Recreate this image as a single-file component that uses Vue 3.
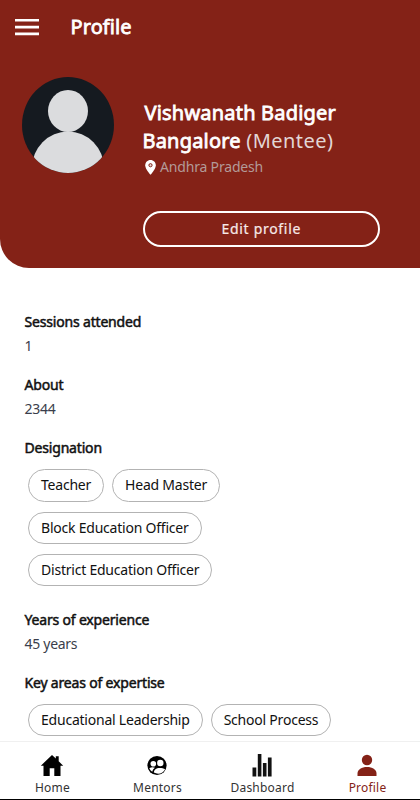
<script setup>
const designations = ['Teacher', 'Head Master', 'Block Education Officer', 'District Education Officer']
const expertise = ['Educational Leadership', 'School Process']
</script>

<template>
  <div class="screen">
    <header class="hero">
      <div class="toolbar">
        <svg class="menu" viewBox="0 0 24 17" width="24" height="17">
          <path d="M0 0h24v2.600H0zM0 6.800h24v2.600H0zM0 13.600h24v2.600H0z" fill="#fff" />
        </svg>
        <h1 class="title">Profile</h1>
      </div>
      <div class="identity">
        <svg class="avatar" viewBox="0 0 92 96" width="92" height="96">
          <defs>
            <clipPath id="avatar-clip"><ellipse cx="46" cy="48" rx="46" ry="48" /></clipPath>
          </defs>
          <g clip-path="url(#avatar-clip)">
            <rect width="92" height="96" fill="#151a20" />
            <ellipse cx="46" cy="34" rx="20" ry="21" fill="#dbdcde" />
            <ellipse cx="46" cy="91" rx="36" ry="36.500" fill="#dbdcde" />
          </g>
        </svg>
        <div class="details">
          <div class="name first">Vishwanath Badiger</div>
          <div class="name second">Bangalore <span class="role">(Mentee)</span></div>
          <div class="place">
            <svg class="pin" viewBox="0 0 11 15" width="11" height="15">
              <path d="M5.500 0C2.500 0 .2 2.300.2 5.200c0 4 5.300 9.600 5.300 9.600s5.300-5.600 5.300-9.600C10.800 2.300 8.500 0 5.500 0z" fill="#fff" />
              <circle cx="5.500" cy="5.200" r="1.600" fill="#e8d6d4" stroke="#842217" stroke-width="1" />
            </svg>
            <span>Andhra Pradesh</span>
          </div>
          <button class="edit">Edit profile</button>
        </div>
      </div>
    </header>

    <main class="content">
      <section class="block">
        <h2>Sessions attended</h2>
        <p>1</p>
      </section>
      <section class="block">
        <h2>About</h2>
        <p>2344</p>
      </section>
      <section class="block tagged">
        <h2>Designation</h2>
        <div class="chips">
          <span v-for="d in designations" :key="d" class="chip">{{ d }}</span>
        </div>
      </section>
      <section class="block">
        <h2>Years of experience</h2>
        <p>45 years</p>
      </section>
      <section class="block tagged">
        <h2>Key areas of expertise</h2>
        <div class="chips wide">
          <span v-for="e in expertise" :key="e" class="chip">{{ e }}</span>
        </div>
      </section>
    </main>

    <nav class="tabs">
      <div class="tab">
        <svg viewBox="0 0 24 24" width="24" height="24">
          <path d="M12 2 .8 12.700h2.700V23h6.200v-7.700h4.600V23h6.200V12.700h2.700L18.700 8.300V3.200h-2.900v2.300z" fill="#000" />
        </svg>
        <span>Home</span>
      </div>
      <div class="tab">
        <svg viewBox="0 0 24 24" width="24" height="24">
          <circle cx="12" cy="12.500" r="9.600" fill="#000" />
          <g fill="#fff">
            <circle cx="8.300" cy="10.800" r="2.800" />
            <circle cx="15.300" cy="10" r="3.200" />
            <path d="M4.300 15.200q2.600-1.400 5.600-.5-2.300 1.600-2.700 4-2-1.300-2.900-3.500z" />
            <path d="M8.800 19.600c.1-3 2.300-4.700 5.900-4.700 2.100 0 4.100.3 5.400 1.300-1.700 3.700-6.400 6-11.300 3.400z" />
          </g>
        </svg>
        <span>Mentors</span>
      </div>
      <div class="tab">
        <svg viewBox="0 0 24 24" width="24" height="24">
          <path d="M2.500 14.500h3.800V23.500H2.500zM7.800 1h3.600v22.500H7.800zM12.900 10h3.600v13.500h-3.600zM17.900 4.500h3.700v19h-3.700z" fill="#111" />
        </svg>
        <span>Dashboard</span>
      </div>
      <div class="tab active">
        <svg viewBox="0 0 24 24" width="24" height="24">
          <circle cx="12" cy="7" r="5.200" fill="#842217" />
          <path d="M2.500 23v-2.500c0-4 4.200-6.500 9.500-6.500s9.500 2.500 9.500 6.500V23z" fill="#842217" />
        </svg>
        <span>Profile</span>
      </div>
    </nav>
  </div>
</template>

<style>
body {
  margin: 0;
  background: #fff;
}
</style>

<style scoped>
.screen {
  width: 420px;
  height: 800px;
  box-sizing: border-box;
  display: flex;
  flex-direction: column;
  overflow: hidden;
  background: #fff;
  font-family: "Noto Sans", sans-serif;
  color: #111;
}
.hero {
  flex: none;
  height: 268.400px;
  background: #842217;
  border-bottom-left-radius: 29px;
  color: #fff;
}
.toolbar {
  display: flex;
  align-items: center;
  height: 54px;
  padding-left: 15px;
}
.title {
  margin: 0 0 0 31.500px;
  font-size: 20px;
  line-height: 28px;
  font-weight: 400;
  letter-spacing: 0.1px;
  -webkit-text-stroke: 0.8px #fff;
}
.identity {
  display: flex;
  padding: 22.700px 0 0 21.500px;
}
.avatar {
  flex: none;
}
.details {
  padding: 22px 0 0 29px;
}
.name {
  font-size: 20px;
  line-height: 28px;
  letter-spacing: 0.2px;
  white-space: nowrap;
  -webkit-text-stroke: 0.8px #fff;
}
.first {
  padding-left: 2px;
}
.role {
  color: #e2d6d5;
  -webkit-text-stroke: 0;
  letter-spacing: 0.450px;
}
.place {
  display: flex;
  align-items: center;
  gap: 4px;
  height: 26px;
  padding: 0 0 0 2.500px;
  font-size: 14px;
  line-height: 20px;
  letter-spacing: -0.180px;
  color: #b39a98;
  white-space: nowrap;
}
.pin {
  margin-bottom: 1px;
}
.place span {
  padding-bottom: 1px;
}
.edit {
  display: block;
  box-sizing: border-box;
  width: 237.500px;
  height: 36.500px;
  margin: 30px 0 0;
  padding: 0;
  border: 2px solid #fff;
  border-radius: 19px;
  background: transparent;
  color: #f7e9e8;
  font: 400 14px/21px "Noto Sans", sans-serif;
  letter-spacing: 0.700px;
  -webkit-text-stroke: 0.2px #f7e9e8;
}
.content {
  flex: 1;
  min-height: 0;
  overflow: hidden;
  padding: 41.600px 24.500px 0;
}
.block {
  height: 63.100px;
}
.block.tagged {
  height: 171.800px;
}
h2 {
  margin: 0;
  font-size: 14px;
  line-height: 24px;
  font-weight: 400;
  letter-spacing: -0.180px;
  -webkit-text-stroke: 0.5px #111;
}
p {
  margin: 0;
  font-size: 14px;
  line-height: 24px;
  letter-spacing: -0.280px;
  color: #3a3e4b;
}
.chips {
  display: flex;
  flex-wrap: wrap;
  gap: 10px 8px;
  padding: 9px 80px 0 3.500px;
}
.chips.wide {
  padding-right: 0;
}
.chip {
  box-sizing: border-box;
  height: 32.400px;
  padding: 0 12px;
  border: 1px solid #b3b3b3;
  border-radius: 17px;
  font-size: 14px;
  line-height: 30px;
  letter-spacing: -0.220px;
  white-space: nowrap;
}
.tabs {
  flex: none;
  display: flex;
  box-sizing: border-box;
  height: 59px;
  padding-top: 11px;
  border-top: 1px solid #f0f0f0;
  border-bottom: 1px solid #000;
  background: #fff;
}
.tab {
  flex: 1;
  display: flex;
  flex-direction: column;
  align-items: center;
  font-size: 12px;
  line-height: 22px;
  letter-spacing: 0.200px;
  color: #333;
}
.tab svg {
  flex: none;
  margin-right: 1px;
}
.tab.active {
  color: #842217;
}
</style>
